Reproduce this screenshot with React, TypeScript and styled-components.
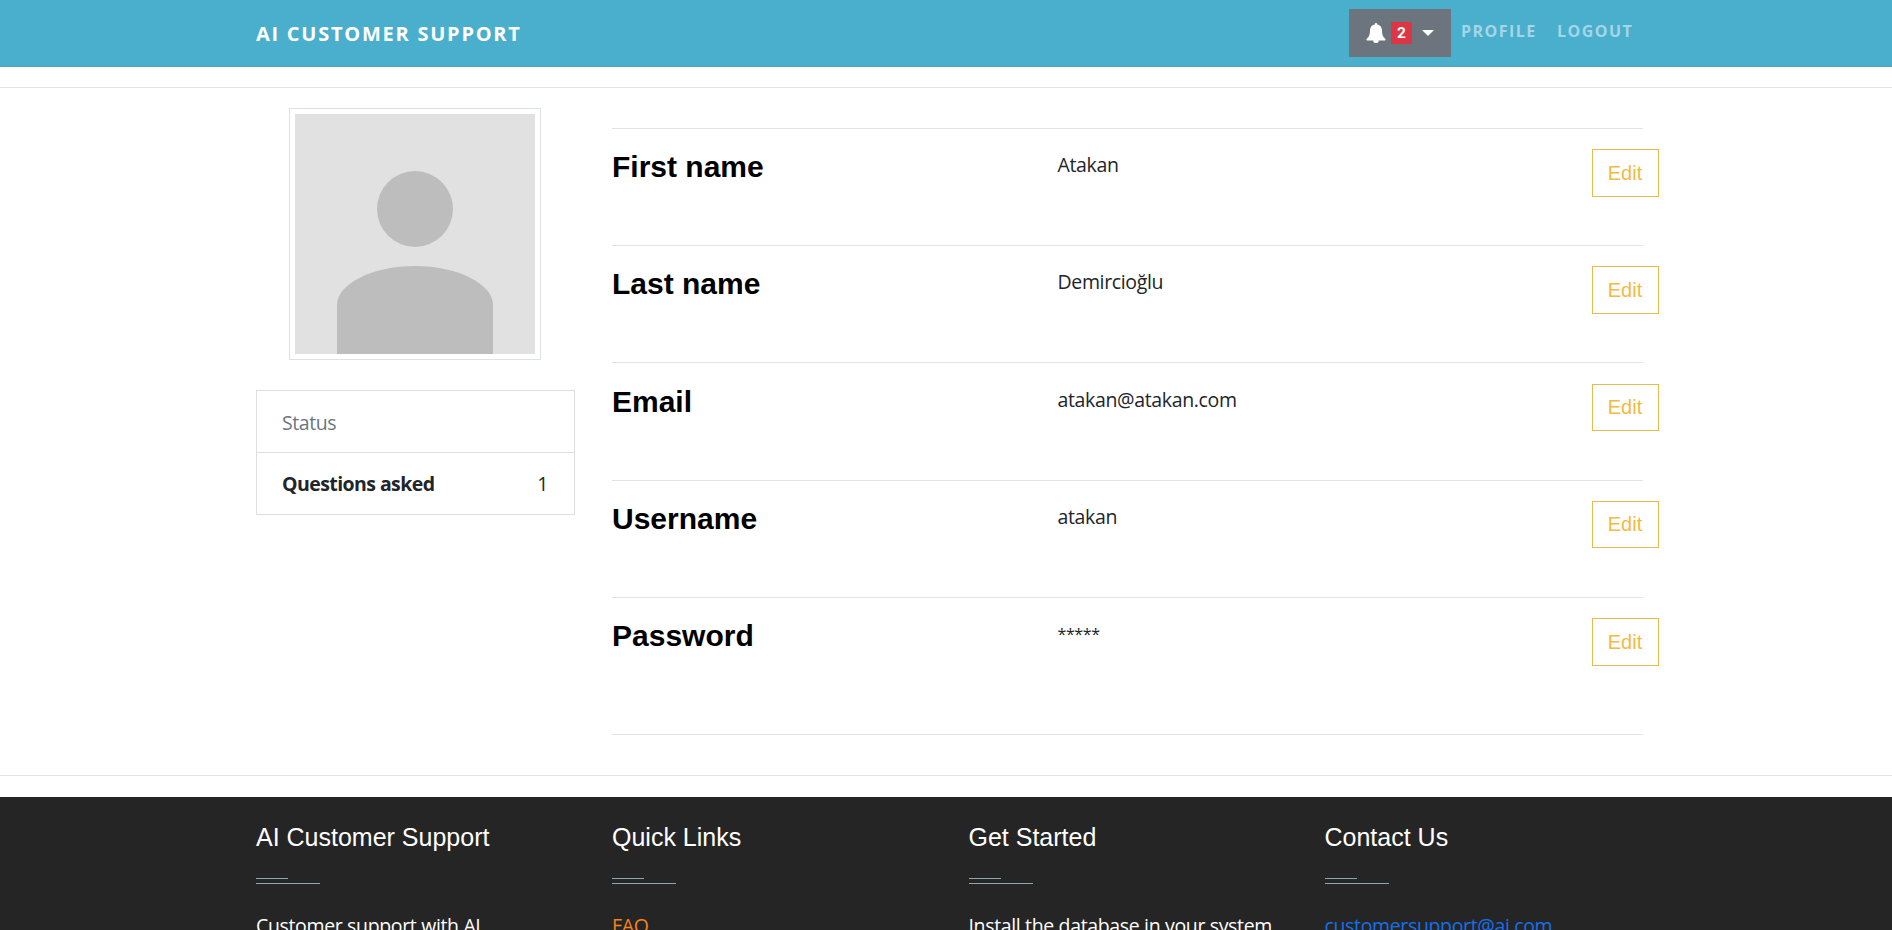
import React from "react";
import styled, { createGlobalStyle } from "styled-components";

const Global = createGlobalStyle`
  * { box-sizing: border-box; }
  html, body { margin: 0; height: 930px; overflow: hidden; background: #fff; }
  body { font-family: "Open Sans", "Noto Sans", sans-serif; font-size: 20px; line-height: 30px; color: #212529; }
  h2, h4, p { margin: 0; }
`;

const Page = styled.div`
  height: 930px;
  overflow: hidden;
  display: flex;
  flex-direction: column;
`;

const Navbar = styled.nav`
  height: 67px;
  flex: none;
  background: #4aaecd;
  border-bottom: 1px solid #56a3bb;
  padding: 9px 249px 0 256px;
  display: flex;
  justify-content: space-between;
  align-items: flex-start;
`;

const Brand = styled.a`
  margin-top: 10px;
  color: #fff;
  font-weight: 700;
  font-size: 20px;
  letter-spacing: 1.75px;
  white-space: nowrap;
`;

const NavItems = styled.div`
  display: flex;
  align-items: flex-start;
`;

const AlertButton = styled.button`
  width: 102px;
  height: 48px;
  padding: 0 0 0 17px;
  border: 0;
  background: #6c757d;
  display: flex;
  align-items: center;
`;

const Badge = styled.span`
  width: 21px;
  height: 22px;
  margin: 0 10px 0 5px;
  background: #dc3545;
  color: #fff;
  font: 700 15.5px/23px Roboto, sans-serif;
  text-align: center;
`;

const NavLink = styled.a<{ $width: number }>`
  width: ${(p) => p.$width}px;
  margin-top: 7px;
  margin-left: 10px;
  color: #a3d7e6;
  font-weight: 700;
  font-size: 16px;
  letter-spacing: 1.45px;
  white-space: nowrap;
`;

const Rule = styled.hr<{ $top?: number; $bottom?: number }>`
  flex: none;
  width: 100%;
  height: 1px;
  border: 0;
  background: #e2e3e3;
  margin: ${(p) => p.$top ?? 0}px 0 ${(p) => p.$bottom ?? 0}px;
`;

const Main = styled.main`
  height: 687px;
  flex: none;
  padding: 0 249px 0 256px;
  display: flex;
  gap: 37px;
`;

const Sidebar = styled.aside`
  width: 319px;
  flex: none;
  padding-top: 20px;
  display: flex;
  flex-direction: column;
`;

const Thumbnail = styled.div`
  width: 252px;
  height: 252px;
  padding: 5px;
  border: 1px solid #dee2e6;
  margin: 0 0 30px 33px;
  svg { display: block; }
`;

const StatusList = styled.ul`
  width: 100%;
  margin: 0;
  padding: 0;
  list-style: none;
  border: 1px solid #dfdfdf;
`;

const StatusItem = styled.li<{ $muted?: boolean }>`
  height: 61px;
  padding: 17px 26px 0 25px;
  display: flex;
  justify-content: space-between;
  color: ${(p) => (p.$muted ? "#6c757d" : "#212529")};
  font-size: 19.5px;
  letter-spacing: -0.45px;
  & + & { border-top: 1px solid #dfdfdf; height: 62px; padding-top: 16px; }
  strong { letter-spacing: -0.57px; }
`;

const Details = styled.section`
  width: 1031px;
  flex: none;
  padding-top: 40px;
`;

const Field = styled.div<{ $height: number; $top: number }>`
  height: ${(p) => p.$height}px;
  margin-right: -16px;
  padding-top: ${(p) => p.$top}px;
  display: grid;
  grid-template-columns: 445.5px 1fr 67px;
  align-items: start;
`;

const FieldName = styled.h2`
  font: 700 30px/36px "Liberation Sans", Arial, sans-serif;
  color: #000;
`;

const FieldValue = styled.p<{ $masked?: boolean }>`
  padding-top: 1px;
  font-size: ${(p) => (p.$masked ? 16 : 19.5)}px;
  letter-spacing: ${(p) => (p.$masked ? -0.4 : -0.35)}px;
`;

const EditButton = styled.button<{ $height: number }>`
  height: ${(p) => p.$height}px;
  padding: 0 1px 0 0;
  border: 1px solid #e2bd4d;
  background: #fff;
  color: #f4b942;
  font: 20px/46px "Liberation Sans", Arial, sans-serif;
  line-height: ${(p) => p.$height - 2}px;
`;

const Footer = styled.footer`
  flex: 1;
  background: #252525;
  color: #fff;
  padding: 25px 0 0 256px;
  display: grid;
  grid-template-columns: 356px 356.5px 356px 1fr;
`;

const FooterTitle = styled.h4`
  font: 400 25px/30px "Liberation Sans", Arial, sans-serif;
  margin-bottom: 26px;
`;

const Underline = styled.div<{ $width: number }>`
  width: ${(p) => p.$width}px;
  height: 1px;
  margin-bottom: 4px;
  background: #8ea5b2;
`;

const FooterText = styled.p<{ $color: string }>`
  margin-top: 27px;
  font-size: 19.5px;
  letter-spacing: -0.35px;
  white-space: nowrap;
  color: ${(p) => p.$color};
`;

const fields = [
  { name: "First name", value: "Atakan", height: 116, top: 20, button: 48 },
  { name: "Last name", value: "Demircioğlu", height: 116, top: 20, button: 48 },
  { name: "Email", value: "atakan@atakan.com", height: 117, top: 21, button: 47 },
  { name: "Username", value: "atakan", height: 116, top: 20, button: 47 },
  { name: "Password", value: "*****", height: 136, top: 20, button: 48, masked: true },
];

const columns = [
  { title: "AI Customer Support", text: "Customer support with AI", color: "#fff" },
  { title: "Quick Links", text: "FAQ", color: "#f58220" },
  { title: "Get Started", text: "Install the database in your system", color: "#fff" },
  { title: "Contact Us", text: "customersupport@ai.com", color: "#1670e8" },
];

export default function App() {
  return (
    <Page>
      <Global />
      <Navbar>
        <Brand>AI CUSTOMER SUPPORT</Brand>
        <NavItems>
          <AlertButton>
            <svg width="20" height="20" viewBox="0 0 20 20" fill="#fff">
              <path d="M10 0a1.300 1.300 0 0 0-1.300 1.400C5.600 2 4 4.300 4 7.500c0 4.800-1.400 6.600-3.200 8.200C.1 16.400.5 17.500 1.500 17.500h17c1 0 1.400-1.100.7-1.800C17.400 14.100 16 12.300 16 7.500c0-3.200-1.600-5.500-4.700-6.100A1.300 1.300 0 0 0 10 0zM7.300 17.400a2.700 2.600 0 0 0 5.400 0z" />
            </svg>
            <Badge>2</Badge>
            <svg width="12" height="6" viewBox="0 0 12 6" fill="#fff">
              <path d="M0 0h12L6 6z" />
            </svg>
          </AlertButton>
          <NavLink $width={86}>PROFILE</NavLink>
          <NavLink $width={86}>LOGOUT</NavLink>
        </NavItems>
      </Navbar>
      <Rule $top={20} />
      <Main>
        <Sidebar>
          <Thumbnail>
            <svg width="240" height="240" viewBox="0 0 240 240">
              <rect width="240" height="240" fill="#e1e1e1" />
              <circle cx="120" cy="95" r="38" fill="#bdbdbd" />
              <path d="M42 240V191C42 170 77 152 120 152S198 170 198 191V240z" fill="#bdbdbd" />
            </svg>
          </Thumbnail>
          <StatusList>
            <StatusItem $muted>Status</StatusItem>
            <StatusItem>
              <strong>Questions asked</strong>
              <span>1</span>
            </StatusItem>
          </StatusList>
        </Sidebar>
        <Details>
          {fields.map((f) => (
            <React.Fragment key={f.name}>
              <Rule />
              <Field $height={f.height} $top={f.top}>
                <FieldName>{f.name}</FieldName>
                <FieldValue $masked={f.masked}>{f.value}</FieldValue>
                <EditButton $height={f.button}>Edit</EditButton>
              </Field>
            </React.Fragment>
          ))}
          <Rule />
        </Details>
      </Main>
      <Rule $bottom={21} />
      <Footer>
        {columns.map((c) => (
          <div key={c.title}>
            <FooterTitle>{c.title}</FooterTitle>
            <Underline $width={32} />
            <Underline $width={64} />
            <FooterText $color={c.color}>{c.text}</FooterText>
          </div>
        ))}
      </Footer>
    </Page>
  );
}
